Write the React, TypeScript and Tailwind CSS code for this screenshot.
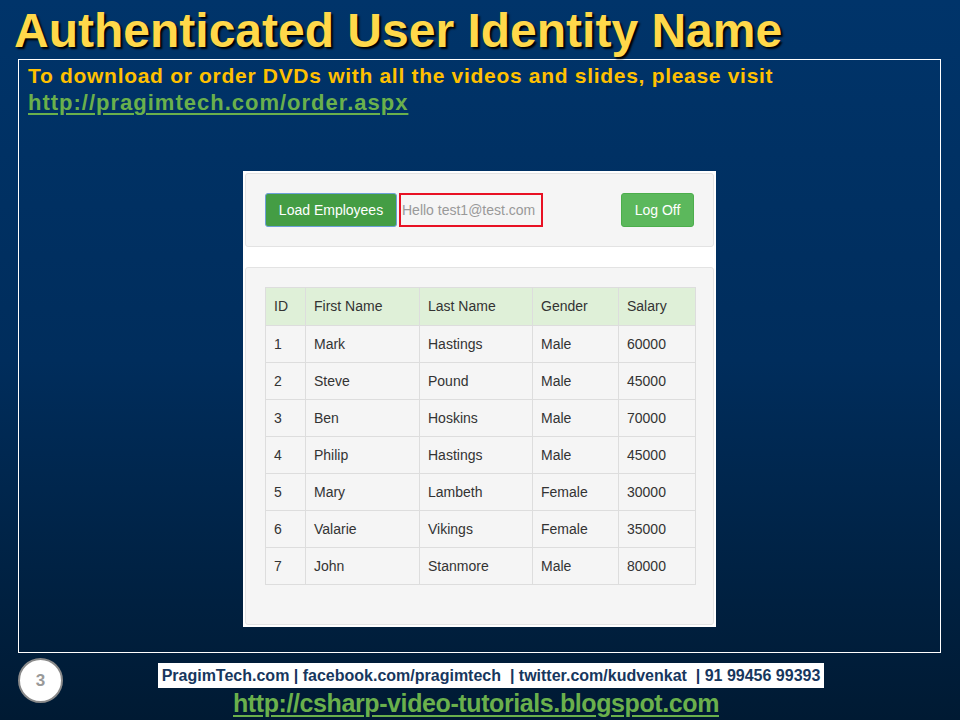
const employees = [
  { id: 1, first: "Mark", last: "Hastings", gender: "Male", salary: 60000 },
  { id: 2, first: "Steve", last: "Pound", gender: "Male", salary: 45000 },
  { id: 3, first: "Ben", last: "Hoskins", gender: "Male", salary: 70000 },
  { id: 4, first: "Philip", last: "Hastings", gender: "Male", salary: 45000 },
  { id: 5, first: "Mary", last: "Lambeth", gender: "Female", salary: 30000 },
  { id: 6, first: "Valarie", last: "Vikings", gender: "Female", salary: 35000 },
  { id: 7, first: "John", last: "Stanmore", gender: "Male", salary: 80000 },
];

function EmployeesPage() {
  return (
    <div className="w-[473px] h-[456px] bg-white p-[2px] font-['Liberation_Sans',Arial,sans-serif] text-[14px] text-[#333]">
      <div className="h-[74px] bg-[#f5f5f5] border border-[#e3e3e3] rounded-[3px] flex items-center px-[19px]">
        <button className="h-[34px] w-[132px] bg-[#449d44] text-white border border-[#6d9fd8] rounded-[3px]">
          Load Employees
        </button>
        <div className="ml-[2px] h-[34px] w-[144px] border-2 border-[#e81123] flex items-center pl-[1px] text-[#999]">
          Hello test1@test.com
        </div>
        <button className="ml-auto h-[34px] w-[73px] bg-[#5cb85c] text-white border border-[#4cae4c] rounded-[3px]">
          Log Off
        </button>
      </div>
      <div className="mt-[20px] h-[358px] bg-[#f5f5f5] border border-[#e3e3e3] rounded-[3px] px-[19px] pt-[19px]">
        <table className="w-[431px] border-collapse">
          <thead>
            <tr className="bg-[#dff0d8] h-[38px]">
              <th className="w-[40px] border border-[#ddd] px-[8px] text-left font-normal">ID</th>
              <th className="w-[114px] border border-[#ddd] px-[8px] text-left font-normal">First Name</th>
              <th className="w-[113px] border border-[#ddd] px-[8px] text-left font-normal">Last Name</th>
              <th className="w-[86px] border border-[#ddd] px-[8px] text-left font-normal">Gender</th>
              <th className="border border-[#ddd] px-[8px] text-left font-normal">Salary</th>
            </tr>
          </thead>
          <tbody>
            {employees.map((e) => (
              <tr key={e.id} className="h-[37px]">
                <td className="border border-[#ddd] px-[8px]">{e.id}</td>
                <td className="border border-[#ddd] px-[8px]">{e.first}</td>
                <td className="border border-[#ddd] px-[8px]">{e.last}</td>
                <td className="border border-[#ddd] px-[8px]">{e.gender}</td>
                <td className="border border-[#ddd] px-[8px]">{e.salary}</td>
              </tr>
            ))}
          </tbody>
        </table>
      </div>
    </div>
  );
}

export default function App() {
  return (
    <div className="w-[960px] h-[720px] overflow-hidden bg-gradient-to-b from-[#00346a] via-[#002d5c] to-[#001a33] font-['Liberation_Sans',Arial,sans-serif]">
      <h1 className="pl-[14px] pt-[7px] h-[59px] text-[48px] leading-[48px] font-bold text-[#ffd84a] [text-shadow:2px_2px_2px_#000]">
        Authenticated User Identity Name
      </h1>

      <div className="ml-[18px] w-[923px] h-[594px] border border-white pl-[9px] pt-[2px]">
        <p className="text-[21px] leading-[27px] font-bold text-[#ffc000] tracking-[0.7px]">
          To download or order DVDs with all the videos and slides, please visit
        </p>
        <a className="block w-fit text-[22px] leading-[27px] font-bold text-[#6ab04c] underline underline-offset-[3px] tracking-[1px]">
          http://pragimtech.com/order.aspx
        </a>
        <div className="mt-[55px] ml-[215px]">
          <EmployeesPage />
        </div>
      </div>

      <div className="relative h-[67px]">
        <div className="absolute left-[18px] top-[5px] w-[45px] h-[45px] rounded-full bg-white border-2 border-[#8a8a8a] flex items-center justify-center text-[#999] text-[17px] font-bold">
          3
        </div>
        <div className="flex flex-col items-center pl-[22px]">
          <div className="mt-[10px] h-[25px] w-[666px] bg-white flex items-center justify-center text-[16px] font-bold text-[#17375e] whitespace-pre">
            PragimTech.com | facebook.com/pragimtech  | twitter.com/kudvenkat  | 91 99456 99393
          </div>
          <a className="ml-[-30px] block text-[25px] leading-[30px] font-bold text-[#6ab04c] underline underline-offset-[3px] tracking-[-0.4px]">
            http://csharp-video-tutorials.blogspot.com
          </a>
        </div>
      </div>
    </div>
  );
}
